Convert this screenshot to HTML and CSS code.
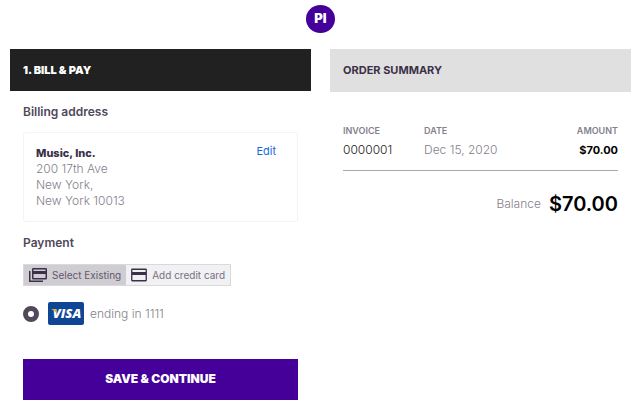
FILE: index.html
```html
<!DOCTYPE html>
<html lang="en">
<head>
<meta charset="utf-8">
<meta name="viewport" content="width=device-width, initial-scale=1">
<title>Bill &amp; Pay</title>
<link rel="stylesheet" href="styles.css">
</head>
<body>
<header class="top"><span class="logo">PI</span></header>
<main class="columns">
  <section class="panel">
    <h1 class="bar bar-dark">1. BILL &amp; PAY</h1>
    <form class="body">
      <h2 class="label">Billing address</h2>
      <div class="address">
        <address class="lines"><strong>Music, Inc.</strong><br>200 17th Ave<br>New York,<br>New York 10013</address>
        <a class="edit" href="#">Edit</a>
      </div>
      <h2 class="label">Payment</h2>
      <div class="tabs">
        <button type="button" class="tab tab-active">
          <svg class="icon" width="18" height="16" viewBox="0 0 18 16" aria-hidden="true"><rect x="3.75" y="1.75" width="13.5" height="10" rx="0.5" fill="none" stroke="currentColor" stroke-width="1.5"/><path d="M3 4h15v3H3z" fill="currentColor"/><path d="M.75 4v10.25H14" fill="none" stroke="currentColor" stroke-width="1.5"/></svg>
          Select Existing
        </button>
        <button type="button" class="tab">
          <svg class="icon" width="16" height="14" viewBox="0 0 16 14" aria-hidden="true"><rect x=".75" y="1.25" width="14.5" height="11.5" rx="0.5" fill="none" stroke="currentColor" stroke-width="1.3"/><path d="M1 4h14v3H1z" fill="currentColor"/></svg>
          Add credit card
        </button>
      </div>
      <label class="saved">
        <input class="radio" type="radio" name="card" checked>
        <svg width="36" height="23" viewBox="0 0 36 23" role="img" aria-label="Visa"><rect width="36" height="23" rx="2" fill="#0e4595"/><text class="visa" x="19" y="16" text-anchor="middle">VISA</text><path d="M3 7h4q1.300 0 1.600 1.200L8.500 11Q6.500 8.500 3 7z" fill="#f2ae14"/></svg>
        <span>ending in 1111</span>
      </label>
      <button type="submit" class="save">SAVE &amp; CONTINUE</button>
    </form>
  </section>
  <section class="panel">
    <h1 class="bar bar-light">ORDER SUMMARY</h1>
    <div class="body">
      <table class="invoices">
        <thead><tr><th class="col-invoice">INVOICE</th><th>DATE</th><th class="amount">AMOUNT</th></tr></thead>
        <tbody><tr><td class="number">0000001</td><td>Dec 15, 2020</td><td class="amount total">$70.00</td></tr></tbody>
      </table>
      <p class="balance">Balance <strong>$70.00</strong></p>
    </div>
  </section>
</main>
</body>
</html>
```
FILE: styles.css
```css
* { box-sizing: border-box; }
body {
  margin: 0;
  padding: 5px 8px 10px 10px;
  background: #fff;
  color: #85808c;
  font: 300 12px/16px Inter, "Liberation Sans", sans-serif;
}
button, input { font: inherit; }
h1, h2, p { margin: 0; }

.top { display: flex; justify-content: center; }
.logo {
  width: 29px;
  height: 28px;
  border-radius: 50%;
  background: #440099;
  color: #fff;
  font-size: 13px;
  font-weight: 900;
  line-height: 27px;
  text-align: center;
}

.columns {
  display: grid;
  grid-template-columns: 1fr 1fr;
  gap: 19px;
  margin-top: 16px;
}
.bar { padding: 13px; font-size: 11px; line-height: 16px; }
.bar-dark { background: #212121; color: #fff; font-weight: 900; }
.bar-light { padding-bottom: 14px; background: #e0e0e0; color: #3a3148; font-weight: 700; }
.body { padding: 13px 13px 0; }

.label { color: #50485c; font-size: 12px; font-weight: 600; }
.address {
  display: flex;
  justify-content: space-between;
  margin: 12px 0 13px;
  padding: 12px 21px 12px 12px;
  border: 1px solid #f4f4f5;
  border-radius: 2px;
}
.lines { font-style: normal; }
.lines strong { color: #3a3148; font-size: 11px; font-weight: 800; }
.edit { margin-top: -2px; color: #1769d9; font-size: 11px; font-weight: 400; text-decoration: none; }

.tabs {
  display: flex;
  width: fit-content;
  margin-top: 13px;
  border: 1px solid #d9d8db;
}
.tab {
  display: flex;
  align-items: center;
  gap: 5px;
  height: 20px;
  padding: 0 5px;
  border: 0;
  background: #f1f0f2;
  color: #777080;
  font-size: 10px;
  font-weight: 400;
}
.tab-active { background: #cfccd2; color: #61596c; }
.icon { color: #3c3049; }

.saved { display: flex; align-items: center; margin-top: 16px; }
.saved span { margin-left: 6px; }
.radio {
  appearance: none;
  width: 16px;
  height: 16px;
  margin: 0 9px 0 0;
  border: 5px solid #50485c;
  border-radius: 50%;
  background: #fff;
}
.visa { fill: #fff; font: italic 800 13px "Open Sans", sans-serif; }
.save {
  display: block;
  width: 100%;
  margin-top: 34px;
  padding: 11px 12px 13px;
  border: 0;
  background: #440099;
  color: #fff;
  font-weight: 900;
  line-height: 17px;
}

.invoices { width: 100%; margin-top: 16px; border-collapse: collapse; border-bottom: 1px solid #a9a9a9; }
.invoices th { padding: 0; color: #858090; font-size: 9px; font-weight: 600; line-height: 20px; text-align: left; }
.invoices td { padding: 1px 0 12px; }
.invoices .amount { text-align: right; }
.invoices .col-invoice { width: 81px; }
.invoices .number { color: #222; }
.invoices .total { color: #000; font-weight: 700; font-size: 11px; }
.balance { display: flex; justify-content: flex-end; align-items: center; gap: 8px; margin-top: 21px; }
.balance strong { color: #000; font-size: 20px; font-weight: 600; line-height: 24px; }
```
